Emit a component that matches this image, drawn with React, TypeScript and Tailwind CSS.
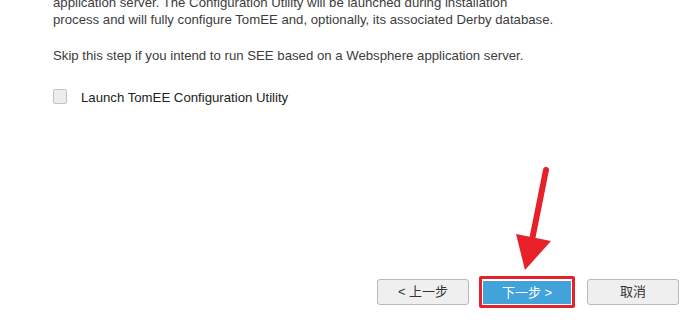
export default function App() {
  return (
    <div className="relative w-[697px] h-[325px] overflow-hidden bg-white text-[#333] [font-family:'Liberation_Sans',Arial,sans-serif]">
      <div className="pl-[53px] -mt-[6px] text-[13.2px] leading-[17px] text-[#3c3c3c]">
        <p>application server. The Configuration Utility will be launched during installation</p>
        <p>process and will fully configure TomEE and, optionally, its associated Derby database.</p>
        <p className="mt-[19px]">Skip this step if you intend to run SEE based on a Websphere application server.</p>
        <label className="mt-[25px] flex items-start">
          <span className="w-[14px] h-[15px] border border-[#c4c4c4] rounded-[2px] bg-[#ececec]" />
          <span className="ml-[14px] text-[#222]">Launch TomEE Configuration Utility</span>
        </label>
      </div>

      <div className="absolute left-0 right-0 top-[276px] flex items-center pl-[377px]">
        <button className="w-[92px] h-[26px] border border-[#b9b9b9] rounded-[3px] bg-[#efefef] text-[13px] text-[#333] [font-family:'Liberation_Sans','Noto_Sans_CJK_SC',sans-serif]">
          &lt; 上一步
        </button>
        <div className="ml-[10px] border-[3px] border-[#e8202a] rounded-[2px] p-px">
          <button className="w-[88px] h-[23px] bg-[#42a2da] text-[13px] text-white [font-family:'Liberation_Sans','Noto_Sans_CJK_SC',sans-serif]">
            下一步 &gt;
          </button>
        </div>
        <button className="ml-[12px] w-[92px] h-[26px] border border-[#b9b9b9] rounded-[3px] bg-[#efefef] text-[13px] text-[#333] [font-family:'Liberation_Sans','Noto_Sans_CJK_SC',sans-serif]">
          取消
        </button>
      </div>

      <svg className="absolute left-0 top-0" width="697" height="325" viewBox="0 0 697 325">
        <line x1="546" y1="170" x2="532" y2="240" stroke="#e8202a" strokeWidth="6" strokeLinecap="round" />
        <polygon points="516,234 551,241 525,270" fill="#e8202a" />
      </svg>
    </div>
  );
}
